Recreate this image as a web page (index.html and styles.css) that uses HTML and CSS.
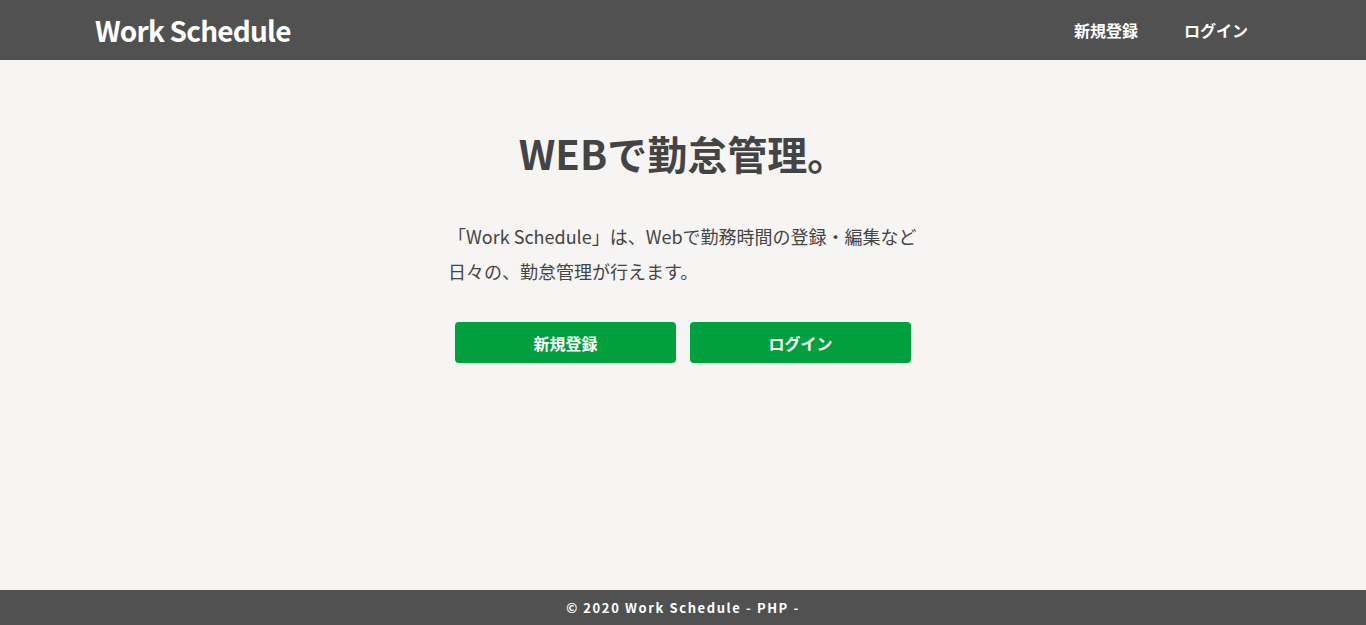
FILE: index.html
```html
<!DOCTYPE html>
<html lang="ja">
<head>
<meta charset="utf-8">
<title>Work Schedule</title>
<link rel="stylesheet" href="styles.css">
</head>
<body>
<header class="header">
  <div class="header-inner">
    <a class="logo" href="#">Work Schedule</a>
    <nav class="nav">
      <a class="nav-link" href="#">新規登録</a>
      <a class="nav-link" href="#">ログイン</a>
    </nav>
  </div>
</header>
<main class="main">
  <h1 class="title">WEBで勤怠管理。</h1>
  <div class="lead">
    <p class="lead-text">「Work Schedule」は、Webで勤務時間の登録・編集など<br>日々の、勤怠管理が行えます。</p>
  </div>
  <div class="actions">
    <a class="btn" href="#">新規登録</a>
    <a class="btn" href="#">ログイン</a>
  </div>
</main>
<footer class="footer">
  <p class="copy">© 2020 Work Schedule - PHP -</p>
</footer>
</body>
</html>
```
FILE: styles.css
```css
* { box-sizing: border-box; }
html, body { height: 100%; }
body {
  margin: 0;
  font-family: "Noto Sans CJK JP", "Noto Sans", sans-serif;
  background: #f6f5f3;
  color: #444;
  display: flex;
  flex-direction: column;
}
a { text-decoration: none; }
.header {
  background: #515151;
  height: 60px;
  flex-shrink: 0;
}
.header-inner {
  width: 1200px;
  margin: 0 auto;
  padding: 0 12px;
  height: 100%;
  display: flex;
  align-items: center;
  justify-content: space-between;
}
.logo {
  color: #fff;
  font-size: 28px;
  font-weight: 700;
  letter-spacing: -0.8px;
}
.nav { display: flex; }
.nav-link {
  color: #fff;
  font-size: 16px;
  font-weight: 700;
  padding: 0 23px;
}
.main {
  flex: 1;
  display: flex;
  flex-direction: column;
  align-items: center;
  padding-top: 63px;
}
.title {
  margin: 0;
  font-size: 40px;
  font-weight: 700;
  color: #444;
  line-height: 1.5;
}
.lead {
  margin-top: 36px;
  width: 470px;
}
.lead-text {
  margin: 0;
  font-size: 18px;
  line-height: 35px;
  color: #444;
  text-align: left;
}
.actions {
  display: flex;
  gap: 14px;
  margin-top: 33px;
}
.btn {
  width: 221px;
  height: 41px;
  background: #00a03e;
  border-radius: 4px;
  color: #fff;
  font-size: 16px;
  font-weight: 700;
  display: flex;
  align-items: center;
  justify-content: center;
}
.footer {
  background: #515151;
  height: 35px;
  flex-shrink: 0;
  display: flex;
  align-items: center;
  justify-content: center;
}
.copy {
  margin: 0;
  color: #fff;
  font-size: 13px;
  font-weight: 700;
  letter-spacing: 1.6px;
}
```
